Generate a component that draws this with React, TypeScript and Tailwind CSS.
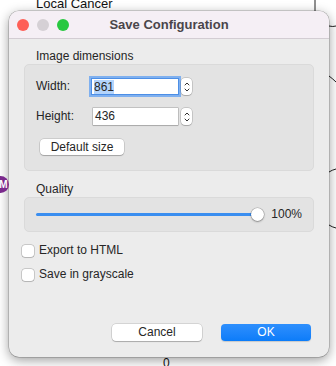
import { ChevronUp, ChevronDown } from "lucide-react";

function Stepper() {
  return (
    <div className="ml-[3px] flex h-[17px] w-[11px] flex-col items-center justify-center rounded-[4px] bg-white shadow-[0_0_0_0.5px_rgba(0,0,0,0.25),0_1px_1px_rgba(0,0,0,0.15)]">
      <ChevronUp className="-mb-[2px] h-[8px] w-[8px] text-[#333]" strokeWidth={3} />
      <ChevronDown className="h-[8px] w-[8px] text-[#333]" strokeWidth={3} />
    </div>
  );
}

function Checkbox({ label }: { label: string }) {
  return (
    <div className="flex items-center gap-[5px]">
      <div className="h-[12px] w-[12px] rounded-[3px] bg-white shadow-[0_0_0_0.5px_rgba(0,0,0,0.3),0_1px_1px_rgba(0,0,0,0.1)]" />
      <span>{label}</span>
    </div>
  );
}

export default function App() {
  return (
    <div
      className="relative h-[366px] w-[336px] overflow-hidden bg-white text-[12px] leading-[15px] text-[#262626]"
      style={{ fontFamily: "'Liberation Sans', Arial, sans-serif" }}
    >
      {/* graph behind the window */}
      <svg className="absolute inset-0" width="336" height="366" fill="none" stroke="#222" strokeWidth="1">
        <path d="M315 0 L315 11" />
        <path d="M329 26 Q333 27 336 26" />
        <path d="M329 76 Q333 79 336 82" />
        <path d="M329 172 Q332 170 336 169" />
        <path d="M329 225 Q332 227 336 228" />
      </svg>
      <div className="absolute left-[36px] top-[-4px] text-[13px] font-medium text-[#111]">Local Cancer</div>
      <div className="absolute left-[163px] top-[356px] text-[12px] text-[#111]">0</div>

      {/* dialog */}
      <div className="relative ml-[9px] mt-[11px] flex h-[346px] w-[320px] flex-col overflow-hidden rounded-[10px] bg-[#ececec] shadow-[0_0_0_0.5px_rgba(0,0,0,0.3),0_3px_12px_rgba(0,0,0,0.4)]">
        <div className="relative flex h-[28px] items-center border-b border-[#d3cdd3] bg-[#f5eff5] pl-[8px]">
          <div className="flex gap-[8px]">
            <div className="h-[12px] w-[12px] rounded-full bg-[#fe5f57]" />
            <div className="h-[12px] w-[12px] rounded-full bg-[#d5d0d5]" />
            <div className="h-[12px] w-[12px] rounded-full bg-[#28c840]" />
          </div>
          <div className="absolute inset-x-0 text-center text-[13px] font-bold text-[#4a454a]">Save Configuration</div>
        </div>

        <div className="flex flex-1 flex-col px-[15px]">
          <div className="mt-[10px] pl-[12px]">Image dimensions</div>
          <div className="flex h-[107px] flex-col rounded-[5px] border border-[#dadada] bg-[#e3e3e3] pl-[11px]">
            <div className="mt-[13px] flex h-[17px] items-center">
              <span className="w-[56px]">Width:</span>
              <div className="flex h-[15px] w-[86px] items-center bg-white pl-[2px] shadow-[0_0_0_3px_#7fb0ef] outline outline-1 outline-[#4d8fe6]">
                <span className="bg-[#b3d4fc] leading-[14px]">861</span>
              </div>
              <Stepper />
            </div>
            <div className="mt-[13px] flex h-[17px] items-center">
              <span className="w-[57px]">Height:</span>
              <div className="flex h-[17px] w-[85px] items-center bg-white pl-[2px] shadow-[0_0_0_0.5px_rgba(0,0,0,0.3),0_1px_1px_rgba(0,0,0,0.1)]">
                436
              </div>
              <Stepper />
            </div>
            <button className="ml-[4px] mt-[14px] h-[16px] w-[84px] rounded-[4px] bg-white text-[12px] leading-[16px] text-[#262626] shadow-[0_0_0_0.5px_rgba(0,0,0,0.2),0_1px_1px_rgba(0,0,0,0.2)]">
              Default size
            </button>
          </div>

          <div className="mt-[11px] pl-[12px]">Quality</div>
          <div className="flex h-[35px] items-center rounded-[5px] border border-[#dadada] bg-[#e3e3e3] pl-[11px] pr-[11px]">
            <div className="relative h-[3px] w-[222px] rounded-full bg-[#3a8ef0]">
              <div className="absolute right-[-6px] top-[-5px] h-[13px] w-[13px] rounded-full bg-white shadow-[0_0_0_0.5px_rgba(0,0,0,0.25),0_1px_2px_rgba(0,0,0,0.3)]" />
            </div>
            <span className="ml-auto">100%</span>
          </div>

          <div className="-ml-[2px] mt-[11px] flex flex-col gap-[9px]">
            <Checkbox label="Export to HTML" />
            <Checkbox label="Save in grayscale" />
          </div>

          <div className="mt-auto mb-[16px] flex justify-end gap-[19px] pr-[3px]">
            <button className="h-[17px] w-[90px] rounded-[4px] bg-white text-[12px] leading-[17px] text-[#262626] shadow-[0_0_0_0.5px_rgba(0,0,0,0.2),0_1px_1px_rgba(0,0,0,0.2)]">
              Cancel
            </button>
            <button className="h-[17px] w-[90px] rounded-[4px] bg-gradient-to-b from-[#2d8ffd] to-[#0a7cf9] text-[12px] font-medium leading-[17px] text-white shadow-[0_1px_1px_rgba(0,0,0,0.15)]">
              OK
            </button>
          </div>
        </div>
      </div>

      {/* node badge peeking out at the left of the window */}
      <div className="absolute left-[-8px] top-[176px] z-10 flex h-[17px] w-[17px] items-center justify-center rounded-full bg-[#7a2a8c] pl-[6px] text-[10px] font-bold text-white">
        M
      </div>
    </div>
  );
}
